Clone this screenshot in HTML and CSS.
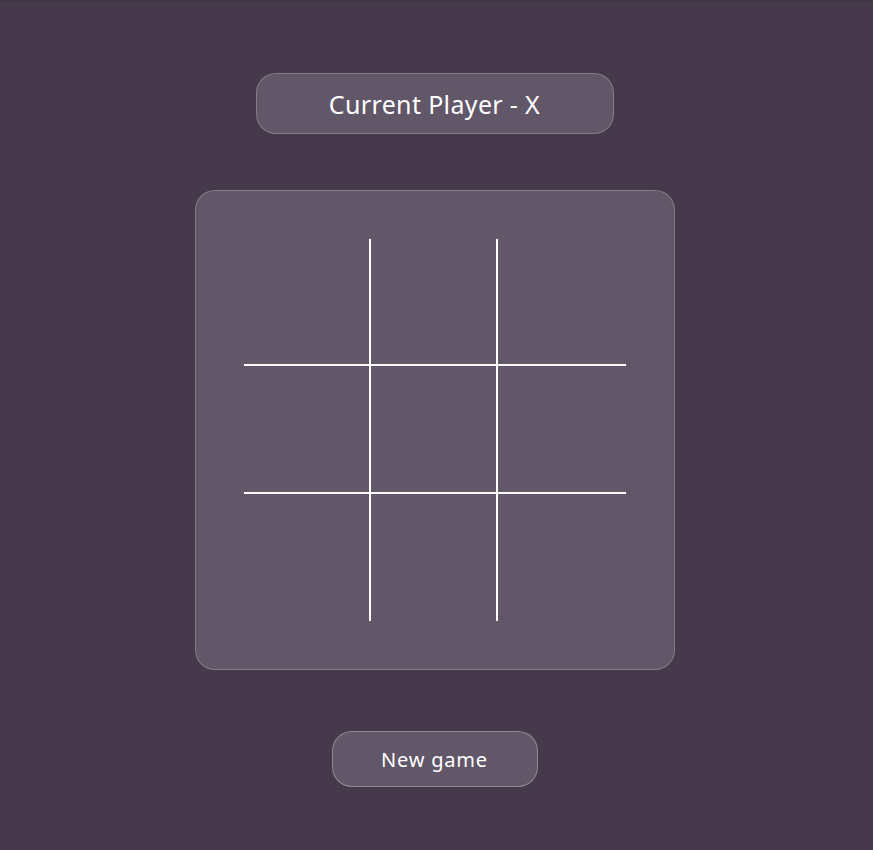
FILE: index.html
```html
<!DOCTYPE html>
<html lang="en">
<head>
<meta charset="utf-8">
<title>Tic Tac Toe</title>
<link rel="stylesheet" href="styles.css">
</head>
<body>
<main class="app">
  <div class="status">Current Player - X</div>
  <div class="board">
    <div class="grid">
      <div class="cell c-r c-b"></div>
      <div class="cell c-r c-b"></div>
      <div class="cell c-b"></div>
      <div class="cell c-r c-b"></div>
      <div class="cell c-r c-b"></div>
      <div class="cell c-b"></div>
      <div class="cell c-r"></div>
      <div class="cell c-r"></div>
      <div class="cell"></div>
    </div>
  </div>
  <button class="new-game" type="button">New game</button>
</main>
</body>
</html>
```

FILE: styles.css
```css
* { box-sizing: border-box; }
html, body {
  margin: 0;
  height: 100%;
}
body {
  background: #45394b;
  border-top: 1px solid #3a3a3c;
  font-family: "Noto Sans", "Open Sans", sans-serif;
  color: #fff;
}
.app {
  display: flex;
  flex-direction: column;
  align-items: center;
  padding-top: 72px;
  padding-right: 4px;
}
.status {
  width: 358px;
  height: 61px;
  display: flex;
  align-items: center;
  justify-content: center;
  background: #615769;
  border: 1px solid rgba(255,255,255,0.22);
  border-radius: 20px;
  font-size: 25px;
  letter-spacing: 0.35px;
}
.board {
  margin-top: 56px;
  width: 480px;
  height: 480px;
  padding: 48px;
  background: #615769;
  border: 1px solid rgba(255,255,255,0.22);
  border-radius: 20px;
}
.grid {
  display: grid;
  grid-template-columns: repeat(3, 1fr);
  grid-template-rows: repeat(3, 1fr);
  width: 382px;
  height: 382px;
}
.c-r { border-right: 2px solid #fff; }
.c-b { border-bottom: 2px solid #fff; }
.new-game {
  margin-top: 61px;
  width: 206px;
  height: 56px;
  padding: 0;
  background: #615769;
  border: 1px solid rgba(255,255,255,0.3);
  border-radius: 20px;
  color: #fff;
  font-family: "Noto Sans", "Open Sans", sans-serif;
  font-size: 20px;
  letter-spacing: 0.8px;
  cursor: pointer;
}
```
